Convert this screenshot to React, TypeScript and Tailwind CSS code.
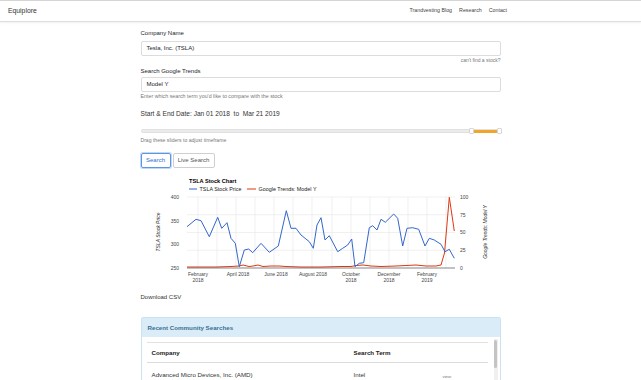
const blue: [number, number][] = [
  [186, 226.7], [195, 219.3], [200, 220.7], [208.3, 236.7], [216.7, 217.3], [220.7, 228.3],
  [226, 222.7], [230, 238.3], [234.3, 243.3], [238.3, 266.7], [243.3, 250], [247.7, 249],
  [251.7, 252.7], [260, 243.3], [268.3, 252.3], [277.3, 246], [285.3, 210.7], [290, 228.3],
  [295, 228.3], [300, 235], [308.3, 241.7], [312.3, 248.3], [316, 225], [320, 217.7],
  [324, 240], [328.3, 235.7], [336.7, 251.7], [341.7, 248.3], [346.7, 245], [350.7, 239],
  [354, 266.7], [358.3, 263.3], [362.7, 262.7], [368.3, 227.7], [371.7, 225.7], [376, 230],
  [380, 219.3], [384.3, 222.3], [392.7, 214], [396.7, 218.3], [401.7, 246], [406, 228.3],
  [411.7, 227.7], [417.7, 229.3], [424, 246], [428.3, 238.3], [433.3, 240], [440, 244.3],
  [444, 251.7], [448.3, 249.3], [453.3, 258.3],
];

const red: [number, number][] = [
  [186, 267], [200, 267], [215, 267], [230, 266.5], [238, 266], [242, 265], [248, 266.5],
  [252, 266], [257, 265], [262, 266.5], [270, 266], [278, 266], [285, 266.5], [300, 267],
  [320, 267], [340, 266.5], [350, 266.5], [355, 265.5], [362, 265], [370, 266], [380, 266.5],
  [395, 266], [405, 265.5], [415, 265], [425, 266], [435, 266], [440, 265], [443.5, 253],
  [448.3, 197.3], [453.3, 231],
];

const pts = (p: [number, number][]) => p.map(([x, y]) => `${x},${y}`).join(" ");

const months = [197, 216, 235, 254, 273, 292, 311, 331, 350, 369, 388, 407, 426, 445];
const hLines = [197, 214.75, 232.5, 250.25];

const xLabels = [
  { x: 197, a: "February", b: "2018" },
  { x: 237, a: "April 2018" },
  { x: 275, a: "June 2018" },
  { x: 312, a: "August 2018" },
  { x: 350, a: "October", b: "2018" },
  { x: 388, a: "December", b: "2018" },
  { x: 426, a: "February", b: "2019" },
];

const StockChart = () => (
  <svg width="360" height="112" viewBox="140 175 360 112" className="block">
    <g fontFamily="Liberation Sans, Arial, sans-serif">
      <text x="188" y="183" fontSize="5.6" fontWeight="bold" fill="#000">TSLA Stock Chart</text>
      <line x1="188" y1="189" x2="196" y2="189" stroke="#3366cc" strokeWidth="1" />
      <text x="198.5" y="191" fontSize="5.4" fill="#222">TSLA Stock Price</text>
      <line x1="246" y1="189" x2="255" y2="189" stroke="#dc3912" strokeWidth="1" />
      <text x="257.5" y="191" fontSize="5.4" fill="#222">Google Trends: Model Y</text>

      {months.map((x) => (
        <line key={x} x1={x} y1="197" x2={x} y2="268" stroke="#e6e6e6" strokeWidth="0.6" />
      ))}
      {hLines.map((y) => (
        <line key={y} x1="186" y1={y} x2="454" y2={y} stroke="#e6e6e6" strokeWidth="0.6" />
      ))}

      {[["400", 199], ["350", 222.5], ["300", 245.5], ["250", 269.5]].map(([t, y]) => (
        <text key={t} x="178" y={y} fontSize="5" fill="#444" textAnchor="end">{t}</text>
      ))}
      {[["100", 198.5], ["75", 216.5], ["50", 234], ["25", 252], ["0", 269.5]].map(([t, y]) => (
        <text key={t} x="459" y={y} fontSize="5" fill="#444">{t}</text>
      ))}

      <text transform="translate(159 232) rotate(-90)" fontSize="5" fontStyle="italic" fill="#222" textAnchor="middle">TSLA Stock Price</text>
      <text transform="translate(486 232) rotate(-90)" fontSize="5" fontStyle="italic" fill="#222" textAnchor="middle">Google Trends: Model Y</text>

      <polyline points={pts(red)} fill="none" stroke="#dc3912" strokeWidth="1" strokeLinejoin="round" />
      <polyline points={pts(blue)} fill="none" stroke="#3366cc" strokeWidth="1" strokeLinejoin="round" />
      <line x1="186" y1="268" x2="454" y2="268" stroke="#333" strokeWidth="0.6" />

      {xLabels.map((l) => (
        <g key={l.x}>
          <text x={l.x} y="275.5" fontSize="5" fill="#444" textAnchor="middle">{l.a}</text>
          {l.b && <text x={l.x} y="282" fontSize="5" fill="#444" textAnchor="middle">{l.b}</text>}
        </g>
      ))}
    </g>
  </svg>
);

export default function App() {
  return (
    <div className="min-h-[380px] bg-white font-['Liberation_Sans',Arial,sans-serif] text-[#212529] overflow-hidden">
      <nav className="h-[22px] flex items-center justify-between px-[8px] border-b border-[#dedede] shadow-[0_1px_2px_rgba(0,0,0,0.06)] border-t border-t-[#d5d5d5]">
        <span className="text-[6.8px] text-[#333]">Equiplore</span>
        <div className="flex gap-[7px] pr-[126px] text-[5.3px] text-[#444]">
          <span>Trandvesting Blog</span>
          <span>Research</span>
          <span>Contact</span>
        </div>
      </nav>

      <main className="w-[360px] mx-auto">
        <div className="pt-[7px] text-[6px] leading-[8px]">Company Name</div>
        <div className="mt-[4px] h-[15px] border border-[#dcdcdc] rounded-[2px] flex items-center px-[5px] text-[6px]">
          Tesla, Inc. (TSLA)
        </div>
        <div className="text-right text-[5px] text-[#777] leading-[6px] mt-[1px]">can't find a stock?</div>
        <div className="mt-[4px] text-[6px] leading-[8px]">Search Google Trends</div>
        <div className="mt-[2px] h-[15px] border border-[#dcdcdc] rounded-[2px] flex items-center px-[5px] text-[6px]">
          Model Y
        </div>
        <div className="text-[5.3px] text-[#777] leading-[6px] mt-[1px]">Enter which search term you'd like to compare with the stock</div>

        <div className="mt-[11px] text-[6.6px] leading-[8px] text-[#333]">
          Start &amp; End Date: Jan 01 2018&nbsp; to&nbsp; Mar 21 2019
        </div>

        <div className="mt-[10px] h-[6px] relative">
          <div className="absolute left-0 right-0 top-[1px] h-[4px] bg-[#ececec] border border-[#e0e0e0] rounded-[2px]" />
          <div className="absolute left-[332px] w-[25px] top-[1.5px] h-[3px] bg-[#f0a52c]" />
          <div className="absolute left-[328px] top-0 w-[5px] h-[6px] bg-white border border-[#d6d6d6] rounded-[1px]" />
          <div className="absolute left-[356px] top-0 w-[5px] h-[6px] bg-white border border-[#d6d6d6] rounded-[1px]" />
        </div>
        <div className="mt-[3px] text-[5.1px] text-[#777] leading-[6px]">Drag these sliders to adjust timeframe</div>

        <div className="mt-[10px] flex gap-[2px]">
          <button className="w-[30px] h-[15px] border border-[#5b95e6] rounded-[2px] text-[6px] text-[#2f6fd6] shadow-[0_0_0_1px_rgba(80,140,230,0.35)]">Search</button>
          <button className="w-[42px] h-[15px] border border-[#cfcfcf] rounded-[2px] text-[6px] text-[#555]">Live Search</button>
        </div>

        <div className="mt-[7px]">
          <StockChart />
        </div>

        <div className="mt-[6px] text-[6px] leading-[8px] text-[#333]">Download CSV</div>

        <div className="mt-[16px] border border-[#c9e3f0] rounded-[2px]">
          <div className="h-[19px] bg-[#d9ecf7] flex items-center px-[6px] text-[6.2px] font-bold text-[#3a6f92]">
            Recent Community Searches
          </div>
          <div className="flex pl-[5px] pr-[2px] pt-[5px] h-[52px] overflow-hidden">
            <div className="w-[342px] border-t border-[#e2e2e2] text-[6.2px]">
              <div className="h-[20px] flex items-center border-b border-[#dcdcdc] font-bold text-[#222]">
                <span className="w-[207px] pl-[5px]">Company</span>
                <span>Search Term</span>
              </div>
              <div className="h-[22px] pt-[8px] flex items-start leading-[8px] text-[#333] relative">
                <span className="w-[207px] pl-[5px]">Advanced Micro Devices, Inc. (AMD)</span>
                <span>Intel</span>
                <span className="absolute left-[296px] top-[11px] text-[4.3px] leading-[6px] text-[#777]">view</span>
              </div>
            </div>
            <div className="ml-[6px] mt-[-3px] w-[4px] h-[52px] bg-[#f0f0f0] flex justify-center">
              <div className="w-[3px] h-[28px] mt-[1px] bg-[#c4c4c4] rounded-[2px]" />
            </div>
          </div>
        </div>
      </main>
    </div>
  );
}
